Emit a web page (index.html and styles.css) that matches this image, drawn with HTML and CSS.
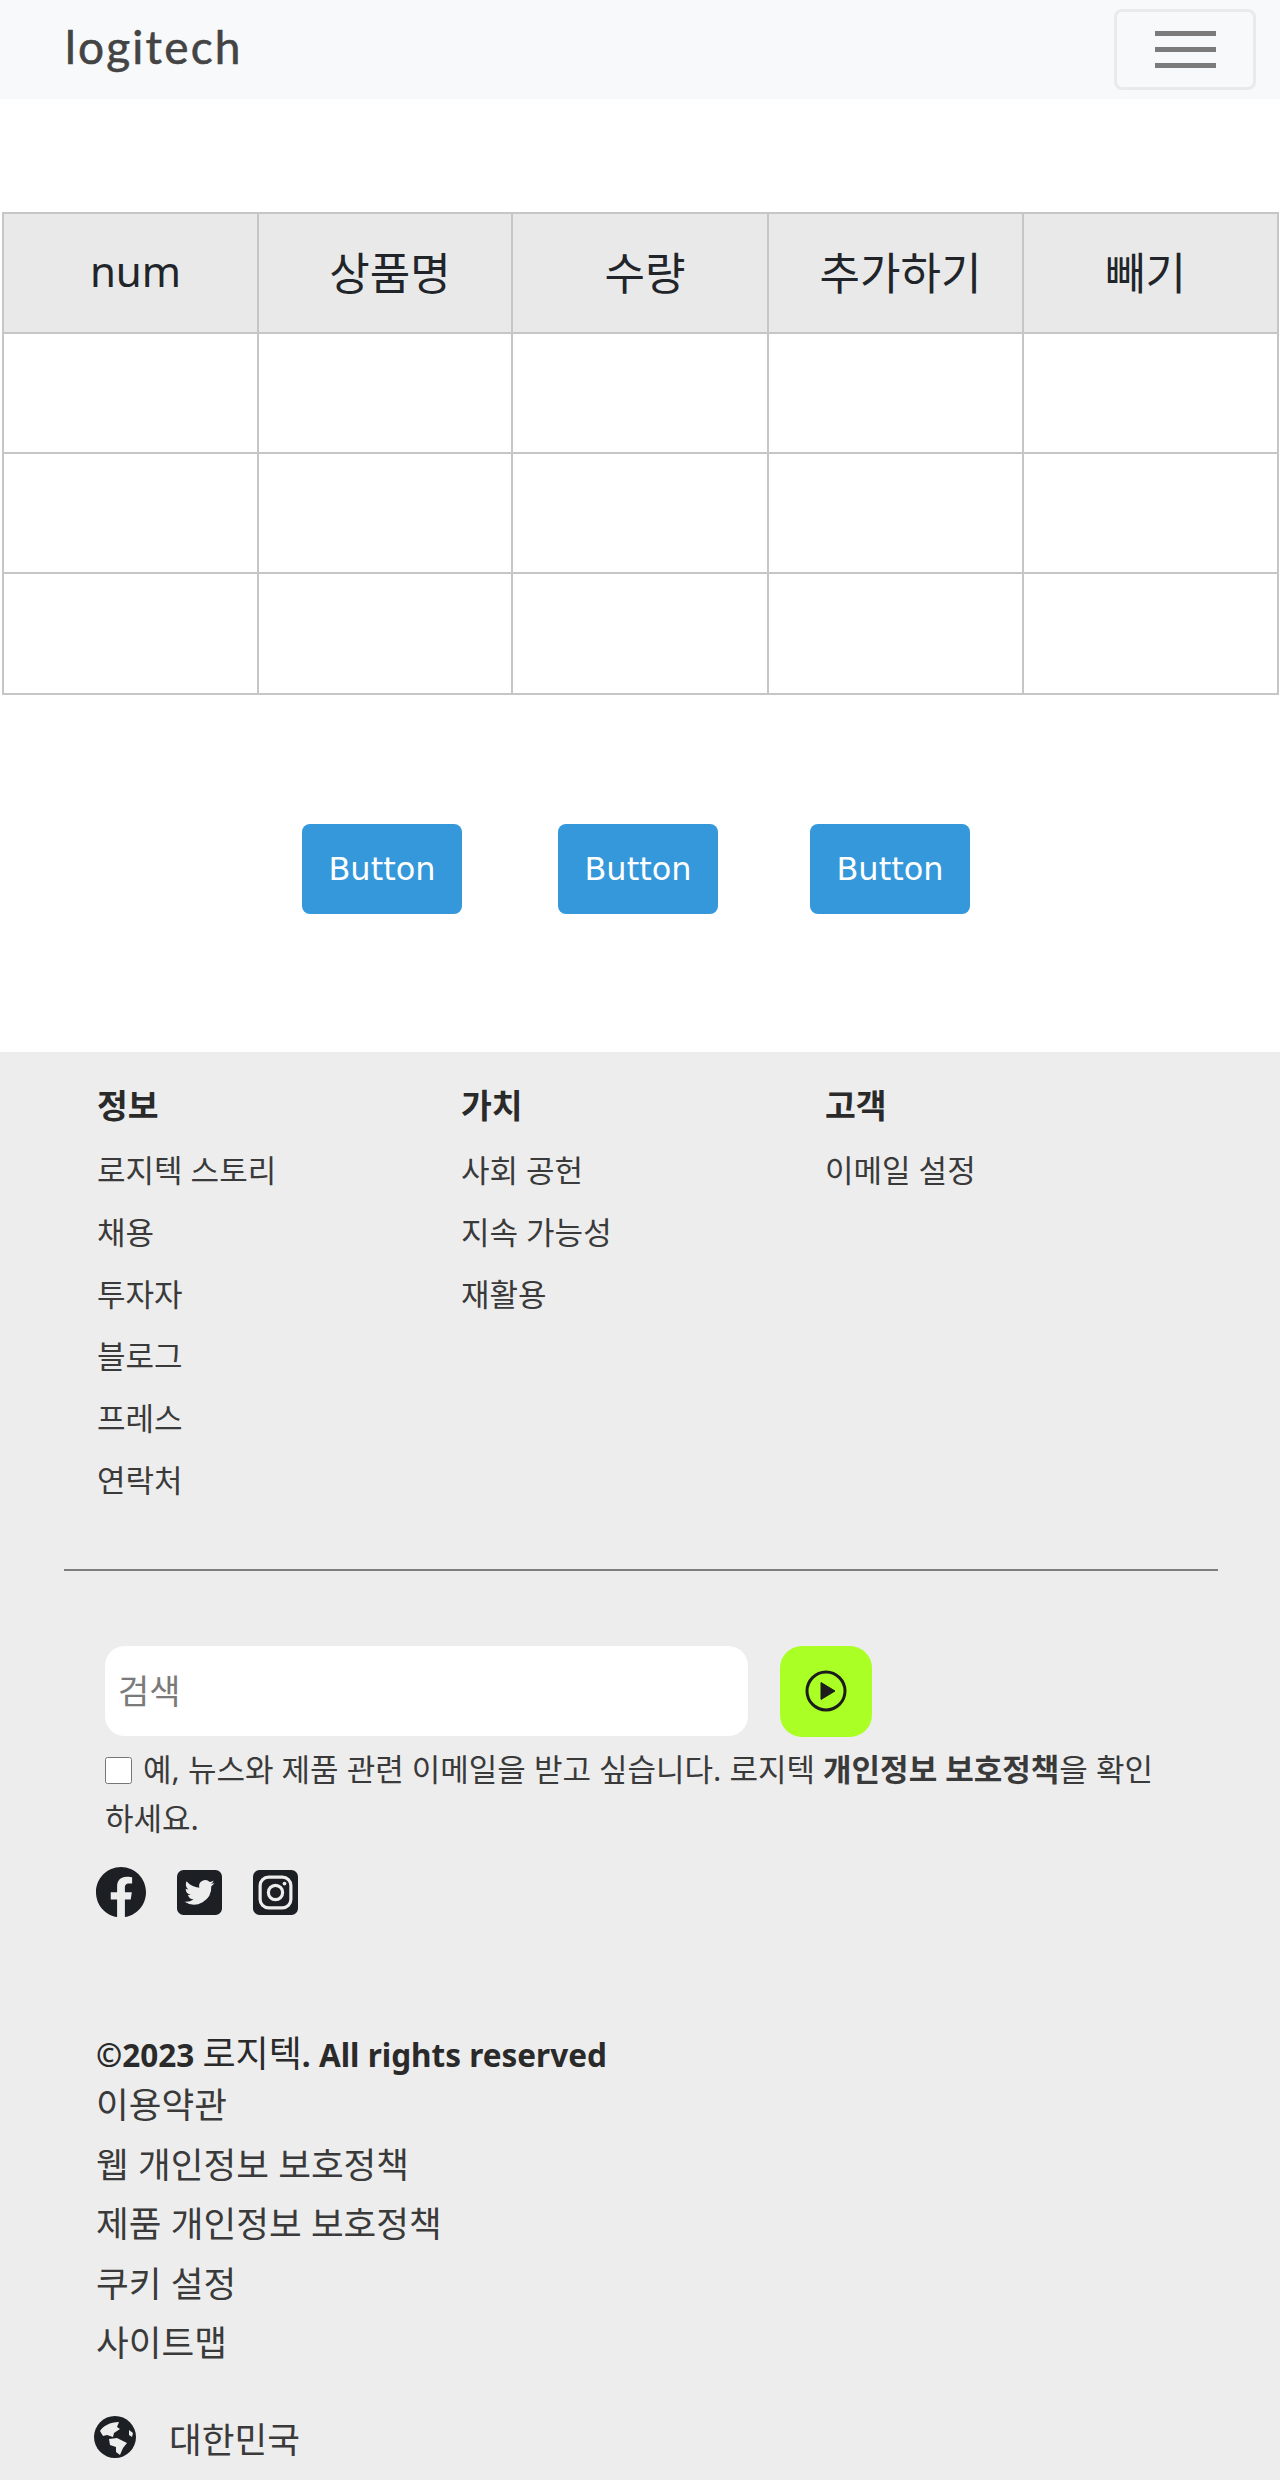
FILE: index.html
```html
<!DOCTYPE html>
<html lang="ko">
  <head>
    <meta charset="UTF-8" />
    <meta name="viewport" content="width=device-width, initial-scale=1.0" />
    <title>장바구니</title>
    <link rel="stylesheet" href="styles.css">
  </head>
  <body>
    <nav class="navbar">
      <a class="logo">logitech</a>
      <button class="toggler" aria-label="메뉴">
        <span></span>
        <span></span>
        <span></span>
      </button>
    </nav>

    <main class="content">
      <table class="cart">
        <colgroup>
          <col class="col-a" />
          <col class="col-b" />
          <col class="col-c" />
          <col class="col-d" />
          <col class="col-e" />
        </colgroup>
        <thead>
          <tr>
            <th class="latin">num</th>
            <th>상품명</th>
            <th>수량</th>
            <th>추가하기</th>
            <th class="last">빼기</th>
          </tr>
        </thead>
        <tbody>
          <tr><td></td><td></td><td></td><td></td><td></td></tr>
          <tr><td></td><td></td><td></td><td></td><td></td></tr>
          <tr><td></td><td></td><td></td><td></td><td></td></tr>
        </tbody>
      </table>
      <div class="actions">
        <button class="btn">Button</button>
        <button class="btn">Button</button>
        <button class="btn">Button</button>
      </div>
    </main>

    <footer class="footer">
      <div class="columns">
        <div class="column">
          <h4>정보</h4>
          <a>로지텍 스토리</a>
          <a>채용</a>
          <a>투자자</a>
          <a>블로그</a>
          <a>프레스</a>
          <a>연락처</a>
        </div>
        <div class="column">
          <h4>가치</h4>
          <a>사회 공헌</a>
          <a>지속 가능성</a>
          <a>재활용</a>
        </div>
        <div class="column">
          <h4>고객</h4>
          <a>이메일 설정</a>
        </div>
      </div>
      <hr class="divider" />

      <form class="signup">
        <div class="search-row">
          <input class="search" type="text" placeholder="검색" />
          <button class="go" type="button" aria-label="검색">
            <svg viewBox="0 0 42 42" width="42" height="42">
              <circle cx="21" cy="21" r="19" fill="none" stroke="#1c1c1c" stroke-width="3" />
              <path d="M16 12.5 L30 21 L16 29.5 Z" fill="#1c1c1c" stroke="#1c1c1c" stroke-width="1" stroke-linejoin="round" />
            </svg>
          </button>
        </div>
        <label class="agree">
          <input type="checkbox" />
          <span>예, 뉴스와 제품 관련 이메일을 받고 싶습니다. 로지텍 </span><b>개인정보 보호정책</b><span>을 확인</span><br />
          <span>하세요.</span>
        </label>
      </form>

      <div class="social">
        <svg class="fb" viewBox="0 0 24 24" width="50" height="50">
          <path fill="#1c1f23" d="M24 12.07C24 5.4 18.63 0 12 0S0 5.4 0 12.07c0 6.03 4.39 11.02 10.13 11.93v-8.44H7.08v-3.49h3.05V9.41c0-3.02 1.79-4.69 4.53-4.69 1.31 0 2.68.23 2.68.23v2.97h-1.51c-1.49 0-1.96.93-1.96 1.89v2.26h3.33l-.53 3.49h-2.8V24C19.61 23.09 24 18.1 24 12.07z" />
        </svg>
        <svg class="tw" viewBox="0 0 24 24" width="45" height="45">
          <rect width="24" height="24" rx="3.5" fill="#1c1f23" />
          <path fill="#ededed" d="M20 6.9c-.6.26-1.2.43-1.88.52a3.3 3.3 0 0 0 1.44-1.81c-.63.37-1.33.65-2.08.8a3.28 3.28 0 0 0-5.59 2.99A9.3 9.3 0 0 1 5.11 6a3.28 3.28 0 0 0 1.02 4.38c-.54-.02-1.05-.17-1.49-.41v.04a3.28 3.28 0 0 0 2.63 3.22c-.48.13-1 .15-1.48.06a3.28 3.28 0 0 0 3.06 2.28A6.6 6.6 0 0 1 4 16.93a9.28 9.28 0 0 0 14.29-8.25c.66-.47 1.22-1.05 1.71-1.78z" />
        </svg>
        <svg class="ig" viewBox="0 0 24 24" width="45" height="45">
          <rect width="24" height="24" rx="3.5" fill="#1c1f23" />
          <rect x="3.8" y="3.8" width="16.4" height="16.4" rx="4.5" fill="none" stroke="#ededed" stroke-width="1.7" />
          <circle cx="12" cy="12" r="3.8" fill="none" stroke="#ededed" stroke-width="1.7" />
          <circle cx="16.8" cy="7.2" r="1" fill="#ededed" />
        </svg>
      </div>

      <div class="legal">
        <p class="copyright">©2023 <span>로지텍</span>. All rights reserved</p>
        <a>이용약관</a>
        <a>웹 개인정보 보호정책</a>
        <a>제품 개인정보 보호정책</a>
        <a>쿠키 설정</a>
        <a>사이트맵</a>
      </div>

      <div class="region">
        <svg viewBox="0 0 42 42" width="42" height="42">
          <circle cx="21" cy="21" r="21" fill="#1c1f23" />
          <path fill="#ededed" d="M6 15 C9 10 16 6 25 6 L23 11 L26 13 L20 17 L19 21 L13 19 L9 20 Z" />
          <path fill="#ededed" d="M15 23 L23 22 L33 27 L29 32 L26 39 L22 36 L22 31 L16 29 Z" />
          <path fill="#ededed" d="M35 14 L39 17 L38 21 L35 19 Z" />
        </svg>
        <span>대한민국</span>
      </div>
    </footer>
  </body>
</html>
```

FILE: styles.css
```css
body {
  margin: 0;
  background-color: #fff;
  font-family: "Noto Sans", "Noto Sans CJK KR", sans-serif;
  color: #212529;
}

.navbar {
  height: 99px;
  background-color: #f8f9fa;
  display: flex;
  justify-content: space-between;
  align-items: center;
  padding: 0 24px 0 65px;
}

.logo {
  font-family: "Lato", sans-serif;
  font-size: 46px;
  letter-spacing: 2.2px;
  color: #444;
  -webkit-text-stroke: 0.6px #444;
  padding-bottom: 6px;
}

.toggler {
  width: 142px;
  height: 81px;
  background: none;
  border: 3px solid #e9eaeb;
  border-radius: 8px;
  display: flex;
  flex-direction: column;
  align-items: center;
  justify-content: center;
  gap: 11px;
  padding: 0;
}

.toggler span {
  width: 61px;
  height: 5px;
  background-color: #7b7b7b;
}

.content {
  padding: 113px 2px 0;
}

.cart {
  width: 1276px;
  border-collapse: collapse;
  table-layout: fixed;
}

.col-a {
  width: 255px;
}

.col-b {
  width: 254px;
}

.col-c {
  width: 256px;
}

.col-d {
  width: 255px;
}

.col-e {
  width: 255px;
}

.cart th,
.cart td {
  border: 2px solid #c6c6c6;
  height: 118px;
  padding: 0;
}

.cart tbody tr:last-child td {
  height: 119px;
}

.cart th {
  height: 113px;
  background-color: #e9e9e9;
  font-size: 44px;
  font-weight: 400;
  padding: 0 0 5px 10px;
}

.cart th.latin {
  font-size: 42px;
}

.cart th.last {
  padding-left: 0;
  padding-right: 10px;
}

.actions {
  display: flex;
  padding: 129px 0 138px 300px;
}

.btn {
  width: 160px;
  height: 90px;
  margin-right: 96px;
  border: 0;
  border-radius: 8px;
  background-color: #3498db;
  color: #fff;
  font-family: "DejaVu Sans", sans-serif;
  font-size: 32px;
}

.btn:nth-child(2) {
  margin-right: 92px;
}

.footer {
  background-color: #ededed;
  height: 1428px;
  padding-top: 30px;
  box-sizing: border-box;
  color: #3a3a3a;
}

.columns {
  display: grid;
  grid-template-columns: 364px 364px 364px;
  padding-left: 97px;
  height: 487px;
}

.column {
  display: flex;
  flex-direction: column;
}

.column h4 {
  margin: 0 0 19px;
  font-size: 33.5px;
  line-height: 46px;
  font-weight: 700;
  color: #2a2a2a;
}

.column a {
  font-size: 31px;
  line-height: 46px;
  margin-bottom: 16px;
}

.divider {
  margin: 0 62px 0 64px;
  border: 0;
  border-top: 2px solid #7d7d7d;
}

.signup {
  padding: 75px 0 0 105px;
}

.search-row {
  display: flex;
  gap: 32px;
}

.search {
  width: 643px;
  height: 90px;
  box-sizing: border-box;
  border: 0;
  border-radius: 20px;
  padding: 0 13px;
  background-color: #fff;
  font-family: inherit;
  font-size: 34px;
}

.search::placeholder {
  color: #7a7a7a;
}

.go {
  width: 92px;
  height: 91px;
  border: 0;
  border-radius: 22px;
  background-color: #aaff25;
  display: flex;
  align-items: center;
  justify-content: center;
  padding: 0 0 2px 0;
}

.agree {
  display: block;
  width: 1060px;
  margin-top: 8px;
  font-size: 31px;
  line-height: 49px;
}

.agree input {
  width: 27px;
  height: 27px;
  margin: 0 3px 0 0;
  vertical-align: -3px;
}

.social {
  display: flex;
  align-items: center;
  padding: 24px 0 0 96px;
}

.social .fb {
  margin-right: 31px;
}

.social .tw {
  margin-right: 31px;
}

.legal {
  display: flex;
  flex-direction: column;
  align-items: flex-start;
  padding: 115px 0 0 96px;
}

.copyright {
  margin: 0 0 3px;
  font-size: 31.5px;
  line-height: 46px;
  font-weight: 700;
  color: #2a2a2a;
}

.copyright span {
  font-size: 36px;
  font-weight: 400;
  line-height: 1;
}

.legal a {
  font-size: 35.6px;
  line-height: 46px;
  margin-bottom: 13.5px;
}

.region {
  display: flex;
  align-items: center;
  gap: 33px;
  padding: 33px 0 0 94px;
  font-size: 35.6px;
}
```
